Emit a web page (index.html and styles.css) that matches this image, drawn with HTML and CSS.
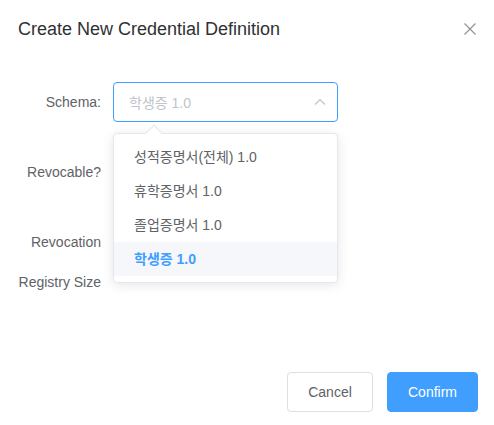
FILE: index.html
```html
<!DOCTYPE html>
<html lang="ko">
<head>
<meta charset="utf-8">
<link rel="stylesheet" href="styles.css">
</head>
<body>
<div class="dialog">
  <header class="dialog-header">
    <span class="dialog-title">Create New Credential Definition</span>
    <button class="close" aria-label="Close">
      <svg width="12" height="12" viewBox="0 0 12 12"><path d="M0.5 0.5 L11.5 11.5 M11.5 0.5 L0.5 11.5" stroke="#909399" stroke-width="1.2" fill="none"/></svg>
    </button>
  </header>
  <div class="dialog-body">
    <div class="form-item row-schema">
      <label class="form-label">Schema:</label>
      <div class="select">
        <div class="input">
          <span class="placeholder">학생증 1.0</span>
          <svg class="caret" width="12" height="8" viewBox="0 0 12 8"><path d="M1 6.5 L6 1.5 L11 6.5" stroke="#c0c4cc" stroke-width="1.2" fill="none"/></svg>
        </div>
        <div class="dropdown">
          <span class="arrow"></span>
          <ul class="options">
            <li class="option">성적증명서(전체) 1.0</li>
            <li class="option">휴학증명서 1.0</li>
            <li class="option">졸업증명서 1.0</li>
            <li class="option selected">학생증 1.0</li>
          </ul>
        </div>
      </div>
    </div>
    <div class="form-item row-revocable">
      <label class="form-label">Revocable?</label>
    </div>
    <div class="form-item row-registry">
      <label class="form-label">Revocation Registry Size</label>
    </div>
  </div>
  <footer class="dialog-footer">
    <button class="btn btn-default">Cancel</button>
    <button class="btn btn-primary">Confirm</button>
  </footer>
</div>
</body>
</html>
```

FILE: styles.css
```css
* { box-sizing: border-box; }
html, body {
  margin: 0;
  padding: 0;
  background: #fff;
}
body {
  font-family: "Liberation Sans", Arial, "Noto Sans CJK KR", sans-serif;
  width: 494px;
  height: 425px;
  overflow: hidden;
}
.dialog {
  position: relative;
  width: 494px;
  height: 425px;
}
.dialog-header {
  display: flex;
  align-items: center;
  justify-content: space-between;
  padding: 17px 18px 0 18px;
  height: 41px;
}
.dialog-title {
  font-size: 18px;
  line-height: 24px;
  color: #303133;
}
.close {
  border: 0;
  background: none;
  padding: 0;
  width: 12px;
  height: 12px;
  margin-right: 0;
  display: flex;
}
.dialog-body {
  padding-top: 41px;
  height: 331px;
}
.form-item {
  display: flex;
  align-items: flex-start;
}
.form-label {
  width: 113px;
  padding-right: 12px;
  text-align: right;
  font-size: 14px;
  line-height: 40px;
  color: #606266;
  flex: none;
}
.row-revocable { margin-top: 30px; }
.row-registry { margin-top: 30px; }
.select {
  position: relative;
  width: 225px;
}
.input {
  height: 40px;
  border: 1px solid #409eff;
  border-radius: 4px;
  display: flex;
  align-items: center;
  justify-content: space-between;
  padding: 0 11px 0 15px;
}
.placeholder {
  font-size: 14px;
  color: #c0c4cc;
}
.caret { display: block; }
.dropdown {
  position: absolute;
  left: 0;
  top: 51px;
  width: 225px;
  background: #fff;
  border: 1px solid #e4e7ed;
  border-radius: 4px;
  box-shadow: 0 2px 12px 0 rgba(0,0,0,0.1);
  z-index: 10;
}
.arrow {
  position: absolute;
  top: -7px;
  left: 34px;
  width: 12px;
  height: 12px;
  background: #fff;
  border-left: 1px solid #e4e7ed;
  border-top: 1px solid #e4e7ed;
  transform: rotate(45deg);
}
.options {
  list-style: none;
  margin: 0;
  padding: 6px 0;
  position: relative;
}
.option {
  height: 34px;
  line-height: 34px;
  padding: 0 20px;
  font-size: 14px;
  color: #606266;
  white-space: nowrap;
}
.option.selected {
  background: #f5f7fa;
  color: #409eff;
  font-weight: 700;
}
.dialog-footer {
  display: flex;
  justify-content: flex-end;
  gap: 14px;
  padding-right: 16px;
}
.btn {
  height: 40px;
  border-radius: 4px;
  font-family: "Liberation Sans", Arial, sans-serif;
  font-size: 14px;
  padding: 0 20px;
  cursor: pointer;
}
.btn-default {
  width: 86px;
  background: #fff;
  border: 1px solid #dcdfe6;
  color: #606266;
}
.btn-primary {
  width: 91px;
  background: #409eff;
  border: 1px solid #409eff;
  color: #fff;
}
```
